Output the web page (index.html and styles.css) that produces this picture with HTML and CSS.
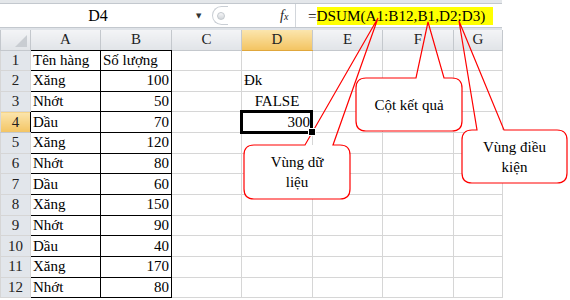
FILE: index.html
```html
<!DOCTYPE html>
<html lang="vi">
  <head>
    <meta charset="UTF-8" />
    <meta name="viewport" content="width=device-width, initial-scale=1.0" />
    <title>DSUM</title>
    <link rel="stylesheet" href="styles.css">
  </head>
  <body>
    <div class="app">
      <div class="ribbon-edge"></div>

      <div class="formula-bar">
        <div class="name-box">D4</div>
        <span class="drop">&#9660;</span>
        <div class="splitter"><span class="knob"></span></div>
        <div class="fx"><i>f</i><small>x</small></div>
        <div class="formula"><span class="eq">=</span><span class="hl">DSUM(A1:B12,B1,D2:D3)</span></div>
      </div>

      <div class="bar-gap"></div>

      <table class="sheet">
        <colgroup>
          <col class="c-head" />
          <col class="c-a" />
          <col class="c-b" />
          <col class="c-a" />
          <col class="c-b" />
          <col class="c-a" />
          <col class="c-b" />
          <col class="c-g" />
        </colgroup>
        <tr class="col-heads">
          <th class="corner"><span class="tri"></span></th>
          <th class="dark-bottom">A</th>
          <th class="dark-bottom">B</th>
          <th>C</th>
          <th class="sel">D</th>
          <th>E</th>
          <th>F</th>
          <th>G</th>
        </tr>
        <tr>
          <th class="row-head">1</th>
          <td class="data">Tên hàng</td><td class="data">Số lượng</td>
          <td></td><td></td><td></td><td></td><td></td>
        </tr>
        <tr>
          <th class="row-head">2</th>
          <td class="data">Xăng</td><td class="data num">100</td>
          <td></td><td>Đk</td><td></td><td></td><td></td>
        </tr>
        <tr>
          <th class="row-head">3</th>
          <td class="data">Nhớt</td><td class="data num">50</td>
          <td></td><td class="bool">FALSE</td><td></td><td></td><td></td>
        </tr>
        <tr>
          <th class="row-head sel">4</th>
          <td class="data">Dầu</td><td class="data num">70</td>
          <td></td><td class="num active">300</td><td></td><td></td><td></td>
        </tr>
        <tr>
          <th class="row-head">5</th>
          <td class="data">Xăng</td><td class="data num">120</td>
          <td></td><td></td><td></td><td></td><td></td>
        </tr>
        <tr>
          <th class="row-head">6</th>
          <td class="data">Nhớt</td><td class="data num">80</td>
          <td></td><td></td><td></td><td></td><td></td>
        </tr>
        <tr>
          <th class="row-head">7</th>
          <td class="data">Dầu</td><td class="data num">60</td>
          <td></td><td></td><td></td><td></td><td></td>
        </tr>
        <tr>
          <th class="row-head">8</th>
          <td class="data">Xăng</td><td class="data num">150</td>
          <td></td><td></td><td></td><td></td><td></td>
        </tr>
        <tr>
          <th class="row-head">9</th>
          <td class="data">Nhớt</td><td class="data num">90</td>
          <td></td><td></td><td></td><td></td><td></td>
        </tr>
        <tr>
          <th class="row-head">10</th>
          <td class="data">Dầu</td><td class="data num">40</td>
          <td></td><td></td><td></td><td></td><td></td>
        </tr>
        <tr>
          <th class="row-head">11</th>
          <td class="data">Xăng</td><td class="data num">170</td>
          <td></td><td></td><td></td><td></td><td></td>
        </tr>
        <tr>
          <th class="row-head">12</th>
          <td class="data">Nhớt</td><td class="data num">80</td>
          <td></td><td></td><td></td><td></td><td></td>
        </tr>
      </table>

      <!-- callout shapes drawn over the sheet -->
      <svg class="callouts" width="570" height="300" viewBox="0 0 570 300">
        <rect x="244" y="145" width="106" height="54" rx="10" fill="#fff" />
        <path d="M254 145 L305 145 L378 18 L333 145 L340 145 Q350 145 350 155 L350 189 Q350 199 340 199 L254 199 Q244 199 244 189 L244 155 Q244 145 254 145 Z" />

        <rect x="356" y="78" width="106" height="53" rx="10" fill="#fff" />
        <path d="M366 78 L416 78 L428 22 L444 78 L452 78 Q462 78 462 88 L462 121 Q462 131 452 131 L366 131 Q356 131 356 121 L356 88 Q356 78 366 78 Z" />

        <rect x="462" y="130" width="105" height="53" rx="10" fill="#fff" />
        <path d="M472 130 L477 130 L459 21 L504 130 L557 130 Q567 130 567 140 L567 173 Q567 183 557 183 L472 183 Q462 183 462 173 L462 140 Q462 130 472 130 Z" />
      </svg>

      <div class="note note-data">Vùng dữ<br>liệu</div>
      <div class="note note-result">Cột kết quả</div>
      <div class="note note-cond">Vùng điều<br>kiện</div>
    </div>
  </body>
</html>
```
FILE: styles.css
```css
* {
  margin: 0;
  padding: 0;
  box-sizing: border-box;
  font-family: "Liberation Serif", Tinos, "Times New Roman", Times, "Nimbus Roman", "Noto Serif", "DejaVu Serif", serif;
}

body {
  background-color: #fff;
  color: #000;
}

.app {
  position: relative;
  width: 570px;
  height: 300px;
  overflow: hidden;
}

.ribbon-edge {
  width: 502px;
  height: 4px;
  background-color: #e4e7ea;
  border-bottom: 1px solid #c3c8ce;
}

.formula-bar {
  width: 502px;
  height: 23px;
  display: flex;
  align-items: center;
  background-color: #fff;
}

.name-box {
  width: 196px;
  text-align: center;
  font-size: 16px;
}

.formula-bar .drop {
  width: 12px;
  font-size: 7px;
  color: #333;
  font-family: "DejaVu Sans", sans-serif;
}

.splitter {
  width: 16px;
  height: 19px;
  margin-left: 4px;
  border: 1px solid #c9ced4;
  border-right: none;
  border-radius: 10px 0 0 10px;
  display: flex;
  align-items: center;
  justify-content: center;
}

.knob {
  width: 8px;
  height: 8px;
  border-radius: 50%;
  background: linear-gradient(#f6f7f8, #d2d6da);
  border: 1px solid #c3c8cd;
}

.fx {
  width: 14px;
  margin-left: 52px;
  font-size: 14px;
  color: #222;
}

.fx small {
  font-size: 10px;
  font-style: italic;
}

.formula {
  flex: 1;
  height: 23px;
  margin-left: 1px;
  padding-left: 12px;
  border-left: 1px solid #d2d6db;
  display: flex;
  align-items: center;
  font-size: 15.2px;
}

.hl {
  display: inline-block;
  height: 18px;
  line-height: 18px;
  padding-right: 8px;
  background-color: #ffff00;
}

.bar-gap {
  width: 502px;
  height: 3px;
  background-color: #dfe3e8;
  border-top: 1px solid #c3c8ce;
}

/* sheet grid */

.sheet {
  width: 502px;
  table-layout: fixed;
  border-collapse: collapse;
  font-size: 15px;
}

.c-head {
  width: 30px;
}

.c-a {
  width: 70px;
}

.c-b {
  width: 71px;
}

.c-g {
  width: 49px;
}

.sheet th,
.sheet td {
  height: 20.65px;
  padding: 0 2px;
  border: 1px solid #d6d6d6;
  white-space: nowrap;
  overflow: visible;
}

.col-heads th {
  height: 20px;
  font-weight: normal;
  color: #222;
  background: linear-gradient(#f3f4f6, #e1e4e8);
  border-color: #c4c8cd;
  border-top: none;
}

.col-heads .dark-bottom {
  border-bottom-color: #000;
}

.corner {
  position: relative;
}

.tri {
  position: absolute;
  right: 3px;
  bottom: 3px;
  border-left: 12px solid transparent;
  border-bottom: 12px solid #c9cdd2;
}

.row-head {
  font-weight: normal;
  color: #222;
  text-align: center;
  background-color: #e2e6eb;
  border-color: #c4c8cd;
  border-right-color: #000;
  border-left: none;
}

.sheet .sel {
  background: linear-gradient(#fbe5ad, #f3c462);
  border-bottom-color: #e0a73c;
}

.sheet .row-head.sel {
  border-bottom-color: #c4c8cd;
  border-right-color: #000;
}

.sheet .data {
  border-color: #000;
}

.num {
  text-align: right;
}

.bool {
  text-align: center;
}

.active {
  position: relative;
  padding-right: 4px;
}

.active::after {
  content: "";
  position: absolute;
  inset: -2px -1px -2px -2px;
  border: 3px solid #000;
}

.active::before {
  content: "";
  position: absolute;
  right: -4px;
  bottom: -4px;
  width: 6px;
  height: 6px;
  background-color: #000;
  border: 1px solid #fff;
  z-index: 1;
}

/* callouts */

.callouts {
  position: absolute;
  top: 0;
  left: 0;
  pointer-events: none;
}

.callouts path {
  fill: none;
  stroke: #ff0000;
  stroke-width: 1.2;
}

.note {
  position: absolute;
  display: flex;
  align-items: center;
  justify-content: center;
  text-align: center;
  font-size: 15px;
  line-height: 20px;
}

.note-data {
  left: 244px;
  top: 145px;
  width: 106px;
  height: 54px;
}

.note-result {
  left: 356px;
  top: 78px;
  width: 106px;
  height: 53px;
}

.note-cond {
  left: 462px;
  top: 130px;
  width: 105px;
  height: 53px;
}
```
